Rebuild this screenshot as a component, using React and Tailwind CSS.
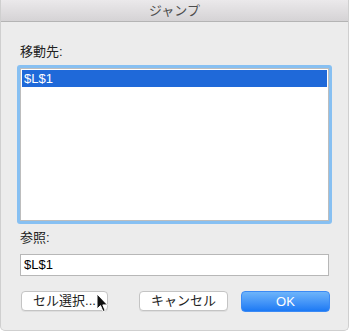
export default function App() {
  return (
    <div className="relative h-[332px] w-[349px] overflow-hidden bg-white font-['Liberation_Sans','Noto_Sans_CJK_JP',sans-serif] text-[13px]">
      <div className="flex h-[331px] flex-col overflow-hidden rounded-b-[5px] border border-t-0 border-[#cfcfcf] bg-[#ececec]">
        <div className="flex h-[22px] shrink-0 items-center justify-center border-b border-[#b4b4b4] bg-gradient-to-b from-[#ebe9eb] to-[#d5d3d5] text-[13px] text-[#4d4d4d]">
          ジャンプ
        </div>

        <div className="flex flex-col px-[16px]">
          <label className="mt-[22px] block pl-[3px] leading-[16px] text-[#222]">移動先:</label>

          <div className="mt-[5px] h-[159px] w-[315px] rounded-[3px] bg-[#87c0f2] p-[3px]">
            <div className="h-full w-full border border-[#bdbdbd] bg-white p-[1px]">
              <div className="h-[17px] bg-[#1f69d9] pl-[2px] leading-[17px] text-white">$L$1</div>
            </div>
          </div>

          <label className="mt-[6px] block pl-[3px] leading-[16px] text-[#222]">参照:</label>

          <div className="ml-[3px] mt-[8px] h-[22px] w-[309px] border border-[#b7b7b7] bg-white pl-[3px] leading-[20px] text-black">
            $L$1
          </div>

          <div className="ml-[4px] mt-[15px] flex items-start">
            <div className="relative">
              <button className="h-[20px] w-[87px] rounded-[4px] border border-[#c4c4c4] bg-white text-[13px] leading-[18px] text-[#222] shadow-[0_1px_0_rgba(0,0,0,0.06)]">
                セル選択...
              </button>
              <svg className="absolute left-[75px] top-[2px]" width="13" height="21" viewBox="0 0 13 21">
                <path d="M1 1 L1 16 L4.5 12.6 L7 18.5 L9.2 17.6 L6.8 11.9 L11.5 11.9 Z" fill="#111" stroke="#fff" strokeWidth="1" strokeLinejoin="round" />
              </svg>
            </div>
            <button className="ml-[31px] h-[20px] w-[89px] rounded-[4px] border border-[#c4c4c4] bg-white text-[13px] leading-[18px] text-[#222] shadow-[0_1px_0_rgba(0,0,0,0.06)]">
              キャンセル
            </button>
            <button className="ml-[13px] h-[21px] w-[89px] rounded-[4px] border border-[#3b8af4] bg-gradient-to-b from-[#6db4fa] to-[#1b79f4] text-[13px] leading-[19px] text-white">
              OK
            </button>
          </div>
        </div>
      </div>
    </div>
  )
}
